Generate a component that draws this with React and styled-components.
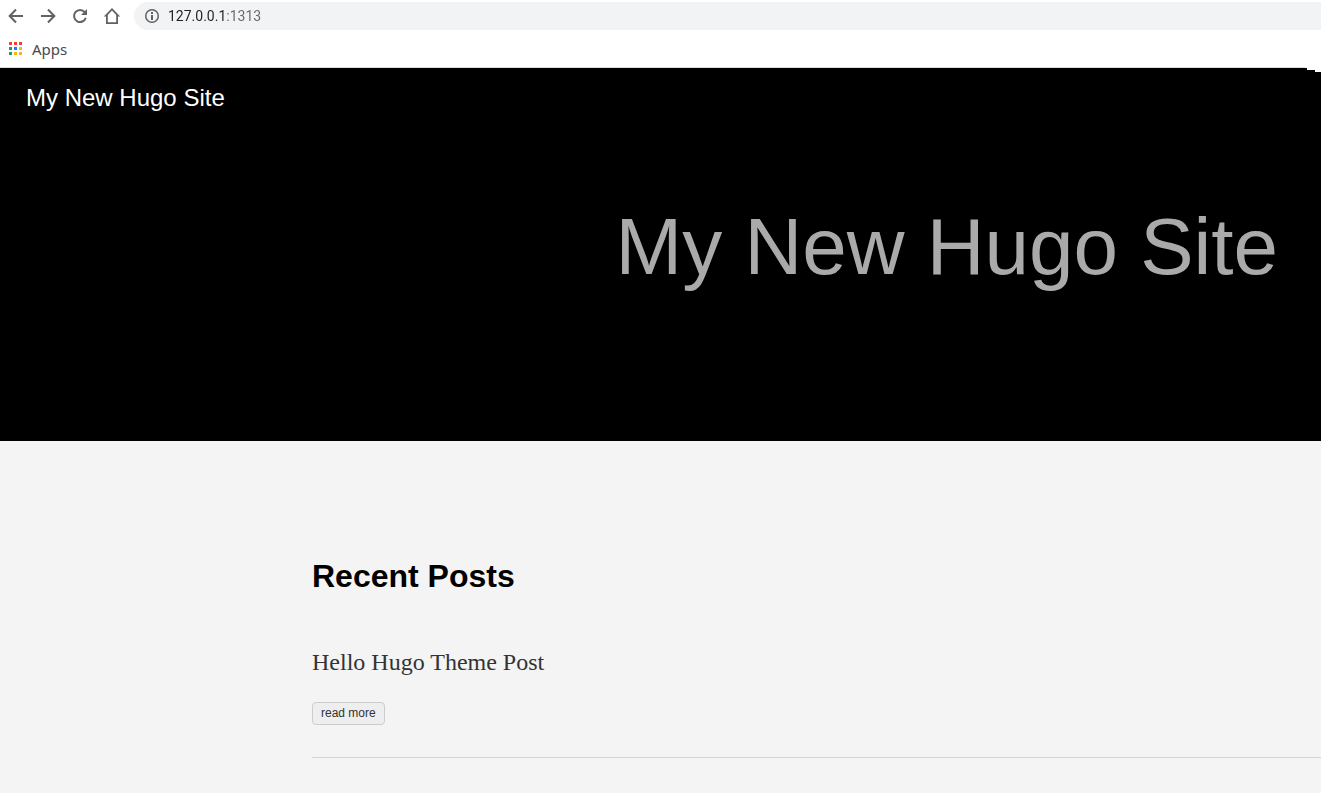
import React from 'react';
import styled, { createGlobalStyle } from 'styled-components';

const GlobalStyle = createGlobalStyle`
  *, *::before, *::after { box-sizing: border-box; }
  body {
    margin: 0;
    background: #f4f4f4;
    font-family: "Liberation Sans", Arial, sans-serif;
    overflow-x: hidden;
  }
`;

const BrowserChrome = styled.div`
  position: relative;
  background: #fff;
  border-bottom: 1px solid #dadce0;
  font-family: "Noto Sans", sans-serif;
`;

const Toolbar = styled.div`
  display: flex;
  align-items: center;
  height: 32px;
`;

const NavButton = styled.button`
  display: flex;
  align-items: center;
  justify-content: center;
  width: 32px;
  height: 32px;
  padding: 0;
  border: 0;
  background: none;
  color: #5f6368;
`;

const AddressBar = styled.label`
  flex: 1;
  display: flex;
  align-items: center;
  gap: 8px;
  height: 28px;
  margin-left: 6px;
  padding-left: 10px;
  border-radius: 14px 0 0 14px;
  background: #f1f3f4;
  color: #5f6368;
`;

const AddressInput = styled.input`
  flex: 1;
  min-width: 0;
  height: 20px;
  padding: 0;
  border: 0;
  outline: 0;
  font: 14px/20px Roboto, sans-serif;
  color: #63676c;
  background: linear-gradient(90deg, #202124 58px, #63676c 58px);
  background-clip: text;
  -webkit-background-clip: text;
  -webkit-text-fill-color: transparent;
`;

const Bookmarks = styled.nav`
  display: flex;
  align-items: center;
  height: 35px;
  padding: 0 0 2px 9px;
`;

const Bookmark = styled.a`
  display: flex;
  align-items: center;
  gap: 10px;
  color: #46494d;
  font-size: 15px;
  line-height: 20px;
  text-decoration: none;
`;

const WindowEdge = styled.svg`
  position: absolute;
  right: 0;
  top: 100%;
`;

const Hero = styled.header`
  background: #000;
  padding: 16px 43px 144px 26px;
`;

const SiteLink = styled.a`
  display: block;
  width: fit-content;
  color: #fff;
  font-size: 24px;
  line-height: 28px;
  text-decoration: none;
`;

const HeroTitle = styled.h1`
  margin: 85px 0 0;
  color: #aaa;
  font-size: 80px;
  font-weight: 400;
  line-height: 100px;
  text-align: right;
  white-space: nowrap;
`;

const Main = styled.main`
  padding: 115px 0 35px 312px;
`;

const SectionTitle = styled.h2`
  margin: 0;
  color: #000;
  font-size: 32px;
  line-height: 40px;
`;

const Post = styled.article`
  display: flex;
  flex-direction: column;
  align-items: flex-start;
  gap: 24px;
  margin-top: 50px;
  padding-bottom: 32px;
  border-bottom: 1px solid #d6d6d6;
`;

const PostTitle = styled.h3`
  margin: 0;
  color: #333;
  font: 400 24px/32px "Liberation Serif", "Times New Roman", serif;
`;

const ReadMore = styled.button`
  height: 23px;
  padding: 0 8px 1px;
  border: 1px solid #ccc;
  border-radius: 4px;
  background: #eee;
  color: #333;
  font: 12px/20px "Liberation Sans", Arial, sans-serif;
`;

const navIcons = [
  ['Back', <path d="M17 10H4M10 3.5L3.7 10l6.3 6.5" />],
  ['Forward', <path d="M3 10h13M10 3.5l6.3 6.5-6.3 6.5" />],
  [
    'Reload',
    <>
      <path d="M14.7 6.2A6 6 0 1 0 15.8 11.7" />
      <path d="M17 3v6h-6z" fill="currentColor" stroke="none" />
    </>,
  ],
  [
    'Home',
    <path
      d="M10 2L1.8 10.4H4V18h12v-7.6h2.2L10 2zM10 4.6l4.2 4.3V16.2H5.8V8.9L10 4.6z"
      fill="currentColor"
      fillRule="evenodd"
      stroke="none"
    />,
  ],
];

const appDots = ['#ff3b30', '#ff3b30', '#ff3b30', '#1e9e57', '#0a84ff', '#fbb416', '#1e9e57', '#fbb416', '#fbb416'];

export default function App() {
  return (
    <>
      <GlobalStyle />
      <BrowserChrome>
        <Toolbar>
          {navIcons.map(([name, drawing]) => (
            <NavButton key={name} type="button" aria-label={name}>
              <svg width="20" height="20" viewBox="0 0 20 20" fill="none" stroke="currentColor" strokeWidth="2" aria-hidden="true">
                {drawing}
              </svg>
            </NavButton>
          ))}
          <AddressBar>
            <svg width="16" height="16" viewBox="0 0 16 16" aria-hidden="true">
              <circle cx="8" cy="8" r="6.3" fill="none" stroke="currentColor" strokeWidth="1.5" />
              <path d="M7 4h2v2H7zM7 7h2v5H7z" fill="currentColor" />
            </svg>
            <AddressInput type="text" aria-label="Address" defaultValue="127.0.0.1:1313" spellCheck={false} />
          </AddressBar>
        </Toolbar>
        <Bookmarks aria-label="Bookmarks">
          <Bookmark href="#apps">
            <svg width="13" height="13" viewBox="0 0 13 13" shapeRendering="crispEdges" aria-hidden="true">
              {appDots.map((color, i) => (
                <rect key={i} x={(i % 3) * 5} y={Math.floor(i / 3) * 5} width="3" height="3" fill={color} />
              ))}
            </svg>
            Apps
          </Bookmark>
        </Bookmarks>
        <WindowEdge width="16" height="5" viewBox="0 0 16 5" shapeRendering="crispEdges" aria-hidden="true">
          <path d="M0 0h16v5h-6V3H2V1H0z" fill="#fff" />
        </WindowEdge>
      </BrowserChrome>
      <Hero>
        <SiteLink href="#home">My New Hugo Site</SiteLink>
        <HeroTitle>My New Hugo Site</HeroTitle>
      </Hero>
      <Main>
        <SectionTitle>Recent Posts</SectionTitle>
        <Post>
          <PostTitle>Hello Hugo Theme Post</PostTitle>
          <ReadMore type="button">read more</ReadMore>
        </Post>
      </Main>
    </>
  );
}
